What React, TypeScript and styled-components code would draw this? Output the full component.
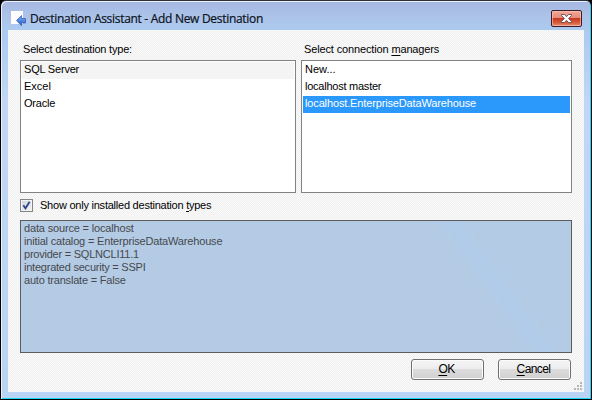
import React from "react";
import styled, { createGlobalStyle } from "styled-components";

const GlobalStyle = createGlobalStyle`
  *, *::before, *::after { box-sizing: border-box; }
  body { margin: 0; background: #000; overflow: hidden; }
`;

const Window = styled.div`
  width: 592px;
  height: 400px;
  display: flex;
  flex-direction: column;
  padding: 0 5px 5px 6px;
  border: 1px solid #000;
  border-top-color: #30303a;
  border-radius: 6px 6px 0 0;
  background:
    linear-gradient(180deg, #a5b8e2 0, #adc3e8 16px, #abcbf1 30px, #c0d6f6 100px, #bad4f5 100%);
  box-shadow: inset 1px 1px 0 #e8f1fc, inset -1px -1px 0 #18d8f4;
  font-family: "Liberation Sans", Arial, sans-serif;
  font-size: 11px;
  color: #000;
`;

const TitleBar = styled.header`
  height: 29px;
  flex: none;
  display: flex;
  align-items: flex-start;
  padding: 9px 4px 0 4px;
`;

const Title = styled.h1`
  margin: 0 auto 0 3px;
  font: 12px/18px "Open Sans", "Noto Sans", sans-serif;
  letter-spacing: -0.3px;
  color: #0b1222;
  white-space: nowrap;
  -webkit-text-stroke: 0.2px #0b1222;
`;

const CloseButton = styled.button`
  width: 31px;
  height: 17px;
  padding: 0;
  display: flex;
  align-items: center;
  justify-content: center;
  border: 1px solid #3c1c28;
  border-radius: 2px;
  background: linear-gradient(#f0a898 0, #e58c7c 46%, #c53a20 50%, #d8603c 80%, #e89078 100%);
  box-shadow: inset 0 0 0 1px rgba(255, 200, 190, 0.6);
`;

const Client = styled.main`
  width: 576px;
  height: 362px;
  margin-left: 1px;
  flex: none;
  position: relative;
  display: flex;
  flex-direction: column;
  padding: 11px 12px 0;
  background: repeating-conic-gradient(#f0f0f0 0 25%, #fafafa 0 50%) 0 0 / 2px 2px;
`;

const Columns = styled.section`
  display: grid;
  grid-template-columns: 276px 271px;
  column-gap: 5px;
`;

const Label = styled.div<{ $spacing?: number }>`
  height: 19px;
  padding-left: 3px;
  line-height: 16px;
  letter-spacing: ${(p) => p.$spacing ?? 0}px;
  white-space: nowrap;
`;

const ListBox = styled.ul`
  height: 133px;
  margin: 0;
  padding: 1px;
  list-style: none;
  border: 1px solid #828282;
  background: #fff;
`;

const ListItem = styled.li<{ $state?: "selected" | "inactive"; $spacing?: number }>`
  height: 17px;
  padding-left: 2px;
  line-height: 15px;
  letter-spacing: ${(p) => p.$spacing ?? 0}px;
  white-space: nowrap;
  color: ${(p) => (p.$state === "selected" ? "#fff" : "#000")};
  background: ${(p) =>
    p.$state === "selected" ? "#2b98fb" : p.$state === "inactive" ? "#f4f4f4" : "transparent"};
`;

const CheckRow = styled.label`
  height: 27px;
  display: flex;
  align-items: center;
`;

const CheckBox = styled.span`
  width: 13px;
  height: 13px;
  display: flex;
  margin: 0 4px 2px 0;
  border: 1px solid #858585;
  background: linear-gradient(135deg, #cfd3d8, #f6f6f6);
  box-shadow: inset 0 0 0 1px #f4f4f4;
`;

const Details = styled.section`
  height: 133px;
  padding: 1px 3px;
  border: 1px solid #5c5c5c;
  line-height: 13px;
  color: #45494f;
  background:
    linear-gradient(54deg, transparent 78%, rgba(166, 206, 248, 0.28) 81%, rgba(166, 206, 248, 0.06) 84%),
    repeating-linear-gradient(90deg, #adcbec 0 1px, #bccbdc 1px 2px);
`;

const DetailLine = styled.div<{ $spacing?: number }>`
  letter-spacing: ${(p) => p.$spacing ?? 0}px;
  white-space: nowrap;
`;

const Footer = styled.footer`
  display: flex;
  justify-content: flex-end;
  gap: 14px;
  padding: 6px 1px 0 0;
`;

const PushButton = styled.button`
  width: 73px;
  height: 21px;
  padding: 0 2px 0 0;
  border: 1px solid #707070;
  border-radius: 3px;
  font: inherit;
  font-size: 12px;
  line-height: 19px;
  letter-spacing: -0.6px;
  color: #000;
  background: linear-gradient(#f5f5f5 0, #ececec 48%, #dcdcdc 50%, #d0d0d0 100%);
  box-shadow: inset 0 0 0 1px #fbfbfb;
`;

const Key = styled.span`
  text-decoration: underline;
  text-decoration-thickness: 1px;
  text-underline-offset: 2px;
  text-decoration-skip-ink: none;
`;

const SizeGrip = styled.svg`
  position: absolute;
  right: 2px;
  bottom: 2px;
`;

const AppIcon = () => (
  <svg width="16" height="17" viewBox="0 0 16 17" aria-hidden="true">
    <defs>
      <linearGradient id="arrow" x1="0" y1="0" x2="0" y2="1">
        <stop offset="0" stopColor="#83b4f4" />
        <stop offset="1" stopColor="#2459ca" />
      </linearGradient>
    </defs>
    <path d="M0 1h12v13H0z" fill="#fdfdff" />
    <path d="M5.5 10.5 10.5 5.5V8.5H14.5V13H10.5V15.7Z" fill="url(#arrow)" stroke="#3a62be" strokeWidth="0.8" />
  </svg>
);

const CloseGlyph = () => (
  <svg width="13" height="11" viewBox="0 0 13 11" aria-hidden="true">
    <path
      d="M1.5 1.5h3l2 2.2 2-2.2h3v1L8.6 5.5l2.9 3v1h-3l-2-2.2-2 2.2h-3v-1l2.9-3-2.9-3z"
      fill="#fff"
      stroke="#5e4a56"
      strokeWidth="0.9"
    />
  </svg>
);

const grip = [[6, 0], [3, 3], [6, 3], [0, 6], [3, 6], [6, 6]];

export default function App() {
  return (
    <>
      <GlobalStyle />
      <Window>
        <TitleBar>
          <AppIcon />
          <Title>Destination Assistant - Add New Destination</Title>
          <CloseButton aria-label="Close">
            <CloseGlyph />
          </CloseButton>
        </TitleBar>
        <Client>
          <Columns>
            <div>
              <Label $spacing={-0.2}>Select destination type:</Label>
              <ListBox>
                <ListItem $state="inactive" $spacing={-0.2}>SQL Server</ListItem>
                <ListItem>Excel</ListItem>
                <ListItem $spacing={-0.2}>Oracle</ListItem>
              </ListBox>
            </div>
            <div>
              <Label $spacing={-0.14}>
                Select connection <Key>m</Key>anagers
              </Label>
              <ListBox>
                <ListItem>New...</ListItem>
                <ListItem $spacing={-0.24}>localhost master</ListItem>
                <ListItem $state="selected" $spacing={-0.14}>localhost.EnterpriseDataWarehouse</ListItem>
              </ListBox>
            </div>
          </Columns>
          <CheckRow>
            <CheckBox>
              <svg width="11" height="11" viewBox="0 0 11 11" aria-hidden="true">
                <path d="M2.3 5.2 4.5 8.3 8.6 1.8" fill="none" stroke="#2b4591" strokeWidth="1.8" />
              </svg>
            </CheckBox>
            <Label $spacing={-0.23}>
              Show only installed destination <Key>t</Key>ypes
            </Label>
          </CheckRow>
          <Details>
            <DetailLine $spacing={-0.16}>data source = localhost</DetailLine>
            <DetailLine $spacing={-0.17}>initial catalog = EnterpriseDataWarehouse</DetailLine>
            <DetailLine $spacing={-0.23}>provider = SQLNCLI11.1</DetailLine>
            <DetailLine $spacing={-0.23}>integrated security = SSPI</DetailLine>
            <DetailLine $spacing={-0.2}>auto translate = False</DetailLine>
          </Details>
          <Footer>
            <PushButton>
              <Key>O</Key>K
            </PushButton>
            <PushButton>
              <Key>C</Key>ancel
            </PushButton>
          </Footer>
          <SizeGrip width="8" height="8" aria-hidden="true">
            {grip.map(([x, y]) => (
              <rect key={`${x}-${y}`} x={x} y={y} width="2" height="2" fill="#b8b8b8" />
            ))}
          </SizeGrip>
        </Client>
      </Window>
    </>
  );
}
